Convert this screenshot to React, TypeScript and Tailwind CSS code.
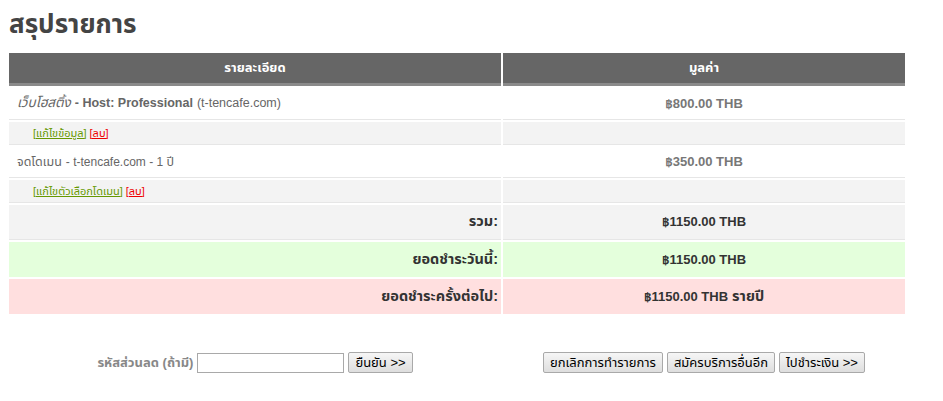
import React from "react";

const font = { fontFamily: '"Liberation Sans", Tahoma, "Noto Sans Thai", sans-serif' };

function Btn({ children }: { children: React.ReactNode }) {
  return (
    <button className="h-[21px] px-[6px] border border-[#a9a9a9] rounded-[2px] bg-gradient-to-b from-[#f6f6f6] to-[#dedede] text-[13px] leading-none text-black">
      {children}
    </button>
  );
}

export default function App() {
  return (
    <div className="bg-white w-[943px] h-[401px] text-[#555]" style={font}>
      <div className="pl-[9px] pt-[9px]">
        <h1 className="text-[26px] leading-[30px] font-bold text-[#444] h-[44px]">สรุปรายการ</h1>
        <div className="w-[896px] grid grid-cols-[492px_402px] gap-x-[2px] gap-y-[2px]">
          {/* header */}
          <div className="h-[33px] bg-[#666] border-b-[3px] border-[#8a8a8a] flex items-center justify-center text-white font-bold text-[13px]">รายละเอียด</div>
          <div className="h-[33px] bg-[#666] border-b-[3px] border-[#8a8a8a] flex items-center justify-center text-white font-bold text-[13px]">มูลค่า</div>

          {/* row 1 */}
          <div className="h-[32px] bg-white border-b border-[#e6e6e6] flex items-center pl-[8px] text-[12.5px] text-[#666]">
            <i className="text-[13.5px]">เว็บโฮสติ้ง</i>
            <span className="ml-[4px] font-bold">- Host: Professional</span>
            <span className="ml-[4px]">(t-tencafe.com)</span>
          </div>
          <div className="h-[32px] bg-white border-b border-[#e6e6e6] flex items-center justify-center text-[13px] font-bold text-[#777]">฿800.00 THB</div>

          <div className="h-[23px] bg-[#f3f3f3] border-b border-[#e6e6e6] flex items-center pl-[24px] text-[11px] gap-[3px]">
            <span className="text-[#669900] underline">[แก้ไขข้อมูล]</span>
            <span className="text-[#ee0000] underline">[ลบ]</span>
          </div>
          <div className="h-[23px] bg-[#f3f3f3] border-b border-[#e6e6e6]"></div>

          {/* row 2 */}
          <div className="h-[31px] bg-white border-b border-[#e6e6e6] flex items-center pl-[8px] text-[12px] text-[#666]">
            <span className="text-[12.5px]">จดโดเมน</span>
            <span className="ml-[4px]">- t-tencafe.com - 1 <span className="text-[12.5px]">ปี</span></span>
          </div>
          <div className="h-[31px] bg-white border-b border-[#e6e6e6] flex items-center justify-center text-[13px] font-bold text-[#777]">฿350.00 THB</div>

          <div className="h-[23px] bg-[#f3f3f3] border-b border-[#e6e6e6] flex items-center pl-[24px] text-[11px] gap-[3px]">
            <span className="text-[#669900] underline">[แก้ไขตัวเลือกโดเมน]</span>
            <span className="text-[#ee0000] underline">[ลบ]</span>
          </div>
          <div className="h-[23px] bg-[#f3f3f3] border-b border-[#e6e6e6]"></div>

          {/* totals */}
          <div className="h-[35px] bg-[#f3f3f3] border-b border-[#e6e6e6] flex items-center justify-end pr-[3px] text-[14.5px] font-bold text-[#333]">รวม:</div>
          <div className="h-[35px] bg-[#f3f3f3] border-b border-[#e6e6e6] flex items-center justify-center text-[13px] font-bold text-[#333]">฿1150.00 THB</div>

          <div className="h-[35px] bg-[#e4ffdc] flex items-center justify-end pr-[3px] text-[14.5px] font-bold text-[#333]">ยอดชำระวันนี้:</div>
          <div className="h-[35px] bg-[#e4ffdc] flex items-center justify-center text-[13px] font-bold text-[#333]">฿1150.00 THB</div>

          <div className="h-[35px] bg-[#ffdfdf] flex items-center justify-end pr-[3px] text-[14.5px] font-bold text-[#333]">ยอดชำระครั้งต่อไป:</div>
          <div className="h-[35px] bg-[#ffdfdf] flex items-center justify-center text-[13px] font-bold text-[#333]">
            <span>฿1150.00 THB</span>
            <span className="ml-[4px] text-[14.5px]">รายปี</span>
          </div>
        </div>

        <div className="w-[896px] grid grid-cols-[492px_402px] gap-x-[2px] mt-[38px]">
          <div className="flex items-center justify-center gap-[4px]">
            <span className="text-[13px] font-bold text-[#888]">รหัสส่วนลด (ถ้ามี)</span>
            <input className="w-[147px] h-[20px] border border-[#a9a9a9] bg-white" />
            <Btn>ยืนยัน &gt;&gt;</Btn>
          </div>
          <div className="flex items-center justify-center gap-[4px]">
            <Btn>ยกเลิกการทำรายการ</Btn>
            <Btn>สมัครบริการอื่นอีก</Btn>
            <Btn>ไปชำระเงิน &gt;&gt;</Btn>
          </div>
        </div>
      </div>
    </div>
  );
}
